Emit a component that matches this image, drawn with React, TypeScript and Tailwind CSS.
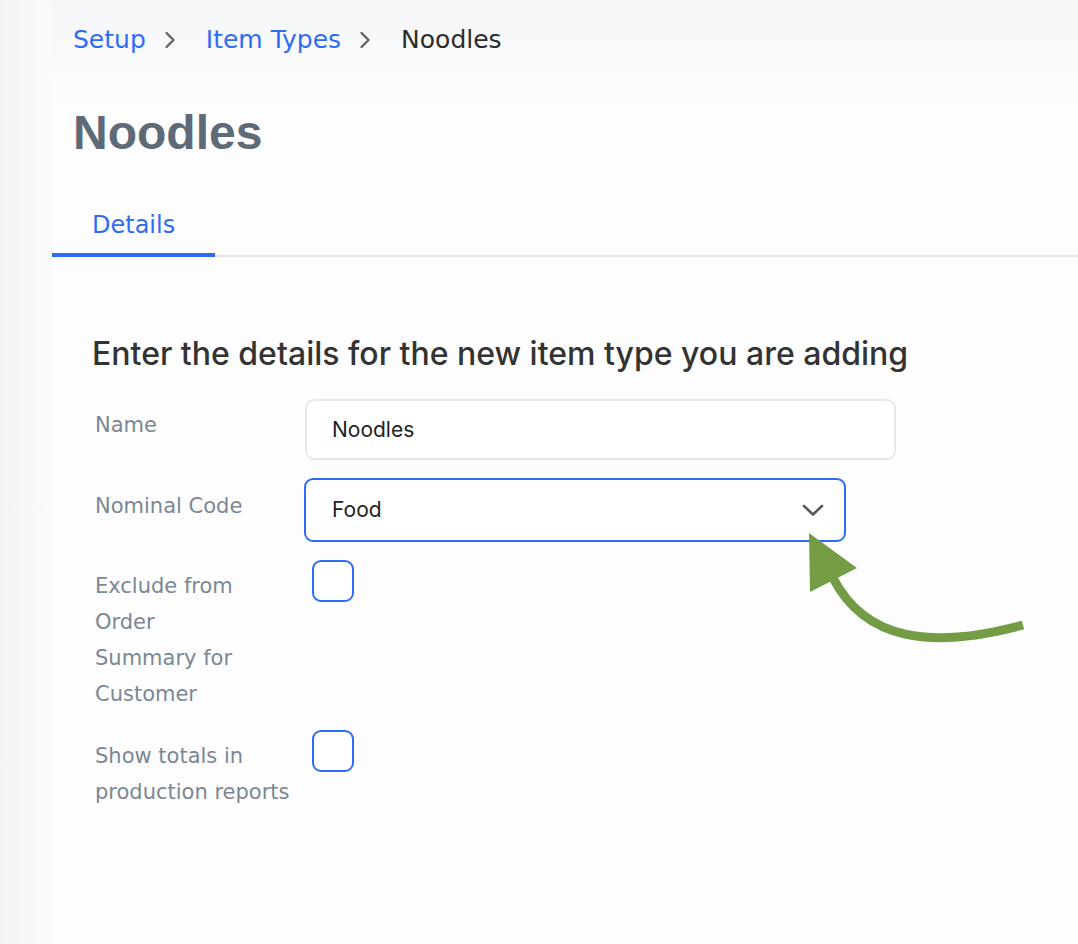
import { useState } from 'react'

const labelFont = { fontFamily: '"DejaVu Sans", Verdana, sans-serif' }

function Chevron() {
	return (
		<svg width="12" height="20" viewBox="0 0 12 20" className="shrink-0">
			<path d="M2.5 3 L9.5 10 L2.5 17" fill="none" stroke="#666" strokeWidth="2.4" strokeLinecap="round" strokeLinejoin="round" />
		</svg>
	)
}

function Box({ checked, onClick }: { checked: boolean; onClick: () => void }) {
	return (
		<button
			onClick={onClick}
			className="ml-[7px] w-[42px] h-[42px] rounded-[9px] border-2 border-[#2f6cf4] bg-white flex items-center justify-center"
		>
			{checked && <span className="w-4 h-4 bg-[#2f6cf4] rounded-sm" />}
		</button>
	)
}

export default function App() {
	const [name, setName] = useState('Noodles')
	const [exclude, setExclude] = useState(false)
	const [totals, setTotals] = useState(false)

	return (
		<div className="relative min-h-screen w-full flex bg-[#fdfdfd] bg-linear-to-b from-[#f5f6f8] to-[#fdfdfd] to-[110px]">
			<div className="w-[52px] shrink-0 bg-linear-to-r from-[#f2f3f4] to-[#fbfbfb]" />
			<main className="flex-1">
				<nav className="flex items-center pl-[21px] pt-6 text-[25px] leading-8" style={labelFont}>
					<a className="text-[#2f6cf4]">Setup</a>
					<span className="ml-[18px] mr-[30px] flex"><Chevron /></span>
					<a className="text-[#2f6cf4]">Item Types</a>
					<span className="ml-[18px] mr-[30px] flex"><Chevron /></span>
					<span className="text-[#2b2b2b]">Noodles</span>
				</nav>

				<h1
					className="mt-[49px] pl-[21px] text-[48px] leading-[56px] font-bold text-[#5e6a78]"
					style={{ fontFamily: '"Liberation Sans", Arial, sans-serif' }}
				>
					Noodles
				</h1>

				<div className="mt-12 flex border-b-2 border-[#e8e8e8]">
					<div
						className="-mb-[2px] px-10 pb-3 border-b-4 border-[#2f6cf4] text-[24px] leading-8 text-[#2f6cf4]"
						style={labelFont}
					>
						Details
					</div>
				</div>

				<section className="pl-10 pt-[77px]">
					<h2
						className="text-[32px] leading-10 font-medium text-[#333]"
						style={{ fontFamily: 'Inter, sans-serif' }}
					>
						Enter the details for the new item type you are adding
					</h2>

					<div className="mt-[25px] flex flex-col gap-[18px] pl-[3px]">
						<div className="flex items-start">
							<label className="w-[210px] shrink-0 pt-2 text-[21px] leading-9 text-[#7b8794]" style={labelFont}>
								Name
							</label>
							<input
								value={name}
								onChange={(e) => setName(e.target.value)}
								className="w-[591px] h-[61px] rounded-[9px] border-2 border-[#e8e8e8] bg-white px-[25px] text-[21px] text-[#222] outline-none"
								style={{ fontFamily: 'Inter, sans-serif' }}
							/>
						</div>

						<div className="flex items-start">
							<label className="w-[209px] shrink-0 pt-[10px] text-[21px] leading-9 text-[#7b8794]" style={labelFont}>
								Nominal Code
							</label>
							<div
								className="w-[542px] h-[64px] rounded-[9px] border-2 border-[#2f6cf4] bg-white pl-[26px] pr-5 flex items-center justify-between text-[21px] text-[#222]"
								style={{ fontFamily: 'Inter, sans-serif' }}
							>
								<span>Food</span>
								<svg width="22" height="13" viewBox="0 0 22 13">
									<path d="M2 2 L11 10.5 L20 2" fill="none" stroke="#5a5a5a" strokeWidth="2.6" strokeLinecap="round" strokeLinejoin="round" />
								</svg>
							</div>
						</div>

						<div className="flex items-start">
							<label className="w-[210px] shrink-0 pt-2 text-[21px] leading-9 text-[#7b8794]" style={labelFont}>
								Exclude from<br />Order<br />Summary for<br />Customer
							</label>
							<Box checked={exclude} onClick={() => setExclude(!exclude)} />
						</div>

						<div className="flex items-start">
							<label className="w-[210px] shrink-0 pt-2 text-[21px] leading-9 text-[#7b8794]" style={labelFont}>
								Show totals in<br />production reports
							</label>
							<Box checked={totals} onClick={() => setTotals(!totals)} />
						</div>
					</div>
				</section>
			</main>

			{/* annotation arrow */}
			<svg className="absolute left-0 top-0 pointer-events-none" width="1078" height="944" viewBox="0 0 1078 944">
				<path d="M833 578 C865 640, 930 650, 1023 625" fill="none" stroke="#739c45" strokeWidth="9" />
				<polygon points="809,533 857,568 810,592" fill="#739c45" />
			</svg>
		</div>
	)
}
